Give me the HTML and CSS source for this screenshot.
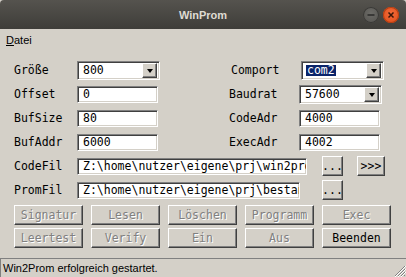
FILE: index.html
```html
<!DOCTYPE html>
<html lang="de">
<head>
    <meta charset="UTF-8">
    <title>WinProm</title>
    <link rel="stylesheet" href="styles.css">
</head>
<body>
    <div class="window">
        <div class="titlebar">
            <span></span>
            <span class="title">WinProm</span>
            <div class="controls">
                <span class="ctl ctl-min">
                    <svg width="16" height="16" viewBox="0 0 16 16"><path d="M4.5 8h7" stroke="#2e2e2c" stroke-width="1.6"/></svg>
                </span>
                <span class="ctl ctl-close">
                    <svg width="16" height="16" viewBox="0 0 16 16"><path d="M5.5 5.5l5 5M10.5 5.5l-5 5" stroke="#3b1608" stroke-width="1.5"/></svg>
                </span>
            </div>
        </div>

        <div class="menubar">
            <span class="menu"><u>D</u>atei</span>
        </div>

        <div class="form">
            <div class="row">
                <div class="pair">
                    <span class="label">Größe</span>
                    <div class="combo sunken"><span class="value">800</span><span class="drop raised"></span></div>
                </div>
                <div class="pair pair-right">
                    <span class="label">Comport</span>
                    <div class="combo sunken"><span class="value selected">com2</span><span class="drop raised"></span></div>
                </div>
            </div>
            <div class="row">
                <div class="pair">
                    <span class="label">Offset</span>
                    <div class="field sunken">0</div>
                </div>
                <div class="pair pair-right">
                    <span class="label">Baudrat</span>
                    <div class="combo sunken"><span class="value">57600</span><span class="drop raised"></span></div>
                </div>
            </div>
            <div class="row">
                <div class="pair">
                    <span class="label">BufSize</span>
                    <div class="field sunken">80</div>
                </div>
                <div class="pair pair-right">
                    <span class="label">CodeAdr</span>
                    <div class="field sunken">4000</div>
                </div>
            </div>
            <div class="row">
                <div class="pair">
                    <span class="label">BufAddr</span>
                    <div class="field sunken">6000</div>
                </div>
                <div class="pair pair-right">
                    <span class="label">ExecAdr</span>
                    <div class="field sunken">4002</div>
                </div>
            </div>
            <div class="row">
                <span class="label">CodeFil</span>
                <div class="field field-path sunken">Z:\home\nutzer\eigene\prj\win2prom</div>
                <span class="btn raised btn-browse">...</span>
                <span class="btn raised btn-next">&gt;&gt;&gt;</span>
            </div>
            <div class="row">
                <span class="label">PromFil</span>
                <div class="field field-path field-short sunken">Z:\home\nutzer\eigene\prj\bestand</div>
                <span class="btn raised btn-browse">...</span>
            </div>
        </div>

        <div class="actions">
            <span class="btn raised disabled">Signatur</span>
            <span class="btn raised disabled">Lesen</span>
            <span class="btn raised disabled">Löschen</span>
            <span class="btn raised disabled">Programm</span>
            <span class="btn raised disabled">Exec</span>
            <span class="btn raised disabled">Leertest</span>
            <span class="btn raised disabled">Verify</span>
            <span class="btn raised disabled">Ein</span>
            <span class="btn raised disabled">Aus</span>
            <span class="btn raised">Beenden</span>
        </div>

        <div class="statusbar">
            <span class="status-text">Win2Prom erfolgreich gestartet.</span>
            <svg class="grip" width="12" height="12" viewBox="0 0 12 12">
                <path d="M11 1L1 11M11 4L4 11M11 7L7 11M11 10L10 11" stroke="#808080" stroke-width="1"/>
                <path d="M12 1L1 12M12 4L4 12M12 7L7 12" stroke="#ffffff" stroke-width="1"/>
            </svg>
        </div>
    </div>
</body>
</html>
```

FILE: styles.css
```css
* {
    margin: 0;
    padding: 0;
    box-sizing: border-box;
}

body {
    background: #d4d0c8;
    font-family: "DejaVu Sans Mono", "Liberation Mono", monospace;
    font-size: 11.5px;
    color: #000;
}

.window {
    width: 406px;
    height: 277px;
    display: flex;
    flex-direction: column;
    position: relative;
    overflow: hidden;
}

/* title bar */
.titlebar {
    height: 29px;
    display: grid;
    grid-template-columns: 1fr auto 1fr;
    align-items: center;
    background: linear-gradient(#55534e, #3e3d39);
    border-radius: 4px 4px 0 0;
}

.title {
    font-family: "Liberation Sans", Arial, sans-serif;
    font-weight: bold;
    font-size: 11px;
    color: #dfdbd2;
}

.controls {
    justify-self: end;
    display: flex;
    gap: 4px;
    padding-right: 7px;
}

.ctl {
    width: 16px;
    height: 16px;
    border-radius: 50%;
    display: flex;
}

.ctl-min {
    background: radial-gradient(circle at 50% 40%, #6c6b67, #53524e);
    box-shadow: inset 0 0 0 1px #3a3936;
}

.ctl-close {
    background: radial-gradient(circle at 50% 40%, #f26b3a, #df4b16);
    box-shadow: inset 0 0 0 1px #b63e12;
}

/* menu */
.menubar {
    height: 22px;
    display: flex;
    align-items: center;
    padding-left: 6px;
    font-family: "Liberation Sans", Arial, sans-serif;
    font-size: 11px;
}

/* bevels */
.sunken {
    background: #fff;
    border: 1px solid;
    border-color: #808080 #fff #fff #808080;
    box-shadow: inset 1px 1px 0 #404040, inset -1px -1px 0 #d4d0c8;
}

.raised {
    background: #d4d0c8;
    border: 1px solid;
    border-color: #fff #404040 #404040 #fff;
    box-shadow: inset -1px -1px 0 #808080;
}

/* form */
.form {
    padding: 7px 0 0 14px;
    display: flex;
    flex-direction: column;
}

.row {
    height: 24px;
    display: flex;
    align-items: center;
}

.pair {
    display: flex;
    align-items: center;
}

.pair-right {
    margin-left: 71px;
}

.label {
    width: 63px;
    flex: none;
}

.pair-right .label {
    width: 70px;
}

.field {
    width: 81px;
    height: 17px;
    padding-left: 5px;
    line-height: 15px;
    white-space: nowrap;
    overflow: hidden;
}

.combo {
    width: 83px;
    height: 19px;
    display: flex;
    align-items: center;
    padding: 0 2px 0 5px;
}

.value {
    line-height: 11px;
    padding: 0 1px;
    margin-left: -1px;
}

.selected {
    background: #0a246a;
    color: #fff;
}

.drop {
    margin-left: auto;
    width: 15px;
    height: 15px;
    display: flex;
    align-items: center;
    justify-content: center;
}

.drop::after {
    content: "";
    border-left: 3.5px solid transparent;
    border-right: 3.5px solid transparent;
    border-top: 4px solid #000;
    margin-top: 1px;
}

.field-path {
    width: 230px;
}

.field-short {
    width: 223px;
}

/* buttons */
.btn {
    display: flex;
    align-items: center;
    justify-content: center;
    height: 20px;
    white-space: nowrap;
}

.btn-browse {
    width: 21px;
    margin-left: 15px;
}

.field-short + .btn-browse {
    margin-left: 22px;
}

.btn-next {
    width: 28px;
    margin-left: 14px;
}

.actions {
    padding: 3px 0 0 14px;
    display: grid;
    grid-template-columns: repeat(5, 69px);
    column-gap: 8px;
    row-gap: 3px;
}

.disabled {
    color: #808080;
    text-shadow: 1px 1px 0 #fff;
}

/* status bar */
.statusbar {
    margin-top: auto;
    height: 19px;
    display: flex;
    align-items: center;
    padding-left: 2px;
    border-top: 1px solid #808080;
    border-left: 1px solid #808080;
    font-family: "Liberation Sans", Arial, sans-serif;
    font-size: 11px;
}

.grip {
    position: absolute;
    right: 0;
    bottom: 0;
}
```
